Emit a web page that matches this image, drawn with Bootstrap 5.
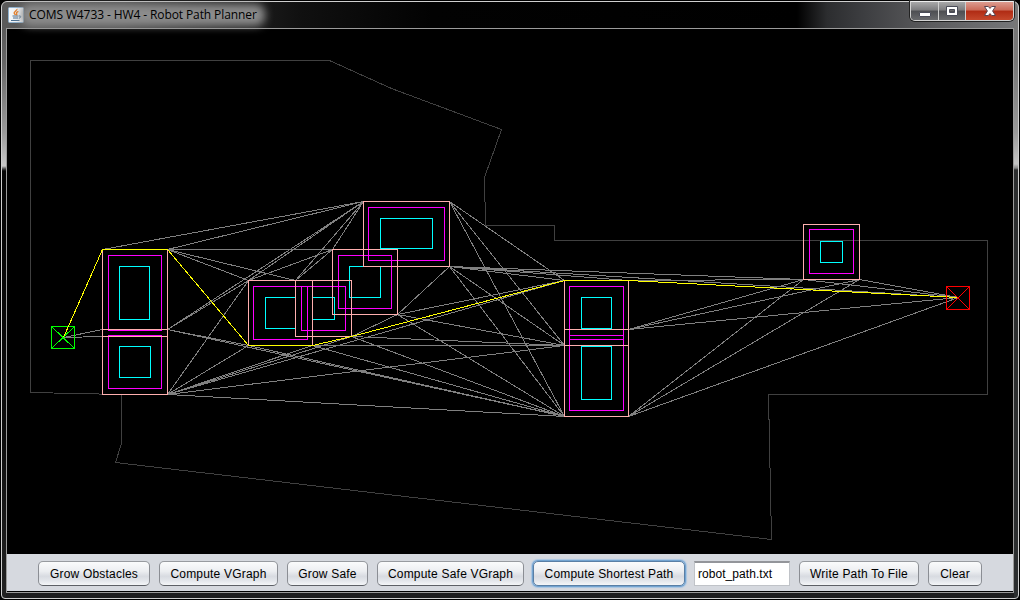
<!DOCTYPE html>
<html lang="en">
<head>
<meta charset="utf-8">
<meta name="viewport" content="width=device-width, initial-scale=1">
<title>COMS W4733 - HW4 - Robot Path Planner</title>
<link href="https://cdn.jsdelivr.net/npm/bootstrap@5.3.0/dist/css/bootstrap.min.css" rel="stylesheet">
<style>
  body { background: #000; width: 1020px; height: 600px; }
  .app-window {
    width: 1020px; height: 600px; padding: 1px 1px 1px 1px;
    background: #000; border-radius: 7px 7px 5px 5px;
  }
  .app-frame {
    border: 1px solid #cfcfcf; border-radius: 6px 6px 4px 4px; padding: 0 4px 4px;
    background:
      linear-gradient(#5a5a5a 28px, #666 60px, #9a9a9a 130px, #c8c8c8 164px, #444 167px, #050505 169px, #0c0c0c 420px, #222 100%) left top / 4px 100% no-repeat,
      linear-gradient(#777 28px, #777 60px, #999 130px, #c4c4c4 162px, #888 166px, #2c2e2f 168px, #2c2e2f 100%) right top / 4px 100% no-repeat,
      linear-gradient(90deg, #5a5a5a 0, #4e4e4e 120px, #1c1c1c 250px, #101010 300px, #020202 430px, #000 795px, #2c2d2f 825px, #3c3d40 860px, #5c5c5e 930px, #77787a 1018px) left top / 100% 27px no-repeat,
      #1d1d1e;
  }
  .title-bar { height: 26px; padding-left: 2px; }
  .title-icon { width: 16px; height: 16px; }
  .title-text {
    position: relative; font: 12px/16px "Open Sans", sans-serif; color: #000;
    letter-spacing: -.1px; margin-left: 5px; white-space: nowrap; z-index: 0;
  }
  .title-text::before {
    content: ""; position: absolute; inset: -3px -8px -3px -8px; z-index: -1;
    background: #8c8c8c; border-radius: 9px; filter: blur(4px);
  }
  .caption-buttons {
    width: 104px; height: 20px; margin-top: -1px;
    border: 1px solid #d2d2d2; border-top: 1px solid #eee; border-radius: 0 0 5px 5px; overflow: hidden;
    box-shadow: 0 0 0 1px #222;
  }
  .cap { background: linear-gradient(#a8a8a9 0, #7c7c7e 45%, #4d4e52 50%, #68696c 100%); border-right: 1px solid #cfcfcf; }
  .cap-min { width: 28px; } .cap-max { width: 27px; }
  .cap-close { background: linear-gradient(#dd9c90 0, #cb6a58 45%, #b02b14 50%, #c5482c 100%); border-right: 0; }
  .client { border: 1px solid #9b9b9b; background: #000; }
  .plan-map { width: 1006px; height: 525px; display: block; }
  .tool-strip { height: 38px; padding-top: 2px; background: #d6d9df; gap: 9px; border-bottom: 1px solid #000; }
  .tool-strip .btn, .tool-strip .form-control {
    font: 12px/16px "Liberation Sans", Arial, sans-serif; color: #000; height: 25px; padding: 0; white-space: nowrap;
    letter-spacing: .2px;
  }
  .tool-strip .btn {
    border: 1px solid #8b8e94; border-top-color: #989ba0; border-bottom-color: #5d6066; border-radius: 5px;
    background: linear-gradient(#fafbfc 0, #eceef1 40%, #d8dbe1 62%, #e2e5ea 80%, #f4f6f8 100%);
  }
  .tool-strip .btn.is-focused { box-shadow: 0 0 0 1px #73a4d1, 0 0 1px 2px #a9c5e2; border-color: #5a7fa5; }
  .tool-strip .form-control {
    width: 96px; border: 1px solid #c0c3c8; border-top: 2px solid #93959a; border-radius: 0; background: #fff; padding-left: 3px;
    letter-spacing: .05px;
  }
</style>
</head>
<body class="m-0 overflow-hidden">
<div class="app-window">
  <div class="app-frame h-100 d-flex flex-column">
    <header class="title-bar d-flex align-items-center flex-shrink-0">
      <svg class="title-icon" viewBox="0 0 16 16">
        <rect x=".5" y=".5" width="15" height="15" rx="1" fill="#f2f5f8" stroke="#8fb0cc"/>
        <path d="M8.800 2c1 1.400-3.400 2.600-2.600 4.300.3.700 1 1 1.300 1.700M10.400 4.400c-1.600.7-2.400 1.400-1.700 2.300.4.600.2 1-.4 1.500" fill="none" stroke="#e8802a" stroke-width="1.400"/>
        <path d="M4.500 9h6M5 11h5M3 13.500h8.500M11 9c2.500-.5 2.300 1.800-.2 2.200" fill="none" stroke="#4c7193" stroke-width="1"/>
      </svg>
      <div class="title-text">COMS W4733 - HW4 - Robot Path Planner</div>
      <div class="caption-buttons d-flex ms-auto align-self-start">
        <div class="cap cap-min d-flex align-items-center justify-content-center">
          <svg width="14" height="14" viewBox="0 0 14 14"><rect x="1.500" y="8.500" width="11" height="4" rx=".5" fill="#fff" stroke="#4a4c58"/></svg>
        </div>
        <div class="cap cap-max d-flex align-items-center justify-content-center">
          <svg width="14" height="14" viewBox="0 0 14 14"><path d="M1.500 2.500h11v9h-11zM4.500 5.500v3h5v-3z" fill="#fff" fill-rule="evenodd" stroke="#4a4c58"/></svg>
        </div>
        <div class="cap cap-close flex-fill d-flex align-items-center justify-content-center">
          <svg width="14" height="14" viewBox="0 0 14 14"><path d="M1.500 2.500h3.800L7 4.400l1.700-1.900h3.800L9.600 7l2.900 4.500H8.700L7 9.600l-1.700 1.900H1.500L4.400 7z" fill="#fff" stroke="#5a4450"/></svg>
        </div>
      </div>
    </header>
    <main class="client">
      <svg class="plan-map" viewBox="7 29 1006 525" shape-rendering="crispEdges" fill="none" stroke-width="1">
        <g transform="translate(.5 .5)">
          <!-- workspace boundary -->
          <path stroke="#404040" d="M30 60H329L391 88L501 129L484 177L485 225H554V240H987V394H768L771 539L115 462L121 443V394L30 392Z"/>
          <!-- visibility graph -->
          <g stroke="#808080">
            <path d="M63 337L102 329M63 337L102 336"/>
            <path d="M102 249L363 201M167 249L363 201M167 249H332M167 249L295 280M167 249L248 280"/>
            <path d="M167 329L363 201M167 329L248 280M167 329L248 345M167 329L564 416"/>
            <path d="M167 394L248 280M167 394L248 345M167 394L312 345M167 394L351 336M167 394L564 280M167 394L564 345M167 394L564 416"/>
            <path d="M248 280L363 201M248 280L332 249M295 280L363 201M295 280L332 249M332 249L363 201"/>
            <path d="M248 345L564 416M312 345H564M312 345L564 416M351 336L397 314M351 336L564 345M351 336L564 416"/>
            <path d="M397 314L449 266M397 314L564 280M397 314L564 345M397 314L564 416"/>
            <path d="M449 201L564 280M449 201L564 345M449 201L564 416"/>
            <path d="M449 266L564 280M449 266L628 280M449 266L803 279M449 266L958 297M449 266L564 345M449 266L564 416"/>
            <path d="M628 280L803 279M628 329L803 279M628 329L859 279M628 329L958 297"/>
            <path d="M628 416L803 279M628 416L859 279M628 416L958 297M803 279L958 297M859 279L958 297"/>
          </g>
          <!-- obstacles -->
          <g stroke="#0ff">
            <path d="M119 266H149V319H119ZM119 346H150V377H119Z"/>
            <path d="M295 297H265V328H295M312 297H334V319H312M363 266H349V297H380V266M380 218H432V248H380Z"/>
            <path d="M581 297H611V328H581ZM581 346H611V399H581ZM820 241H842V262H820Z"/>
          </g>
          <!-- grown obstacles -->
          <g stroke="#f0f">
            <path d="M108 255H161V330H108ZM108 335H161V388H108Z"/>
            <path d="M253 286H307V339H253ZM301 286H345V330H301ZM338 255H391V308H338ZM368 207H444V260H368Z"/>
            <path d="M569 286H623V339H569ZM569 335H623V410H569ZM809 229H853V273H809Z"/>
          </g>
          <!-- safety margin -->
          <g stroke="#ffafaf">
            <path d="M102 249H167V336H102ZM102 329H167V394H102Z"/>
            <path d="M248 280H312V345H248ZM295 280H351V336H295ZM332 249H397V314H332ZM363 201H449V266H363Z"/>
            <path d="M564 280H628V345H564ZM564 329H628V416H564ZM803 224H859V279H803Z"/>
          </g>
          <!-- shortest path, start and goal -->
          <path stroke="#0f0" d="M51 326H74V348H51ZL74 348M74 326L51 348"/>
          <path stroke="#ff0" d="M63 337L102 249H167L248 345H312L351 336L564 280H628L958 297"/>
          <path stroke="#f00" d="M946 286H969V309H946ZL969 309M969 286L946 309"/>
        </g>
      </svg>
      <div class="tool-strip d-flex align-items-center justify-content-center">
        <button type="button" class="btn" style="width:112px">Grow Obstacles</button>
        <button type="button" class="btn" style="width:119px">Compute VGraph</button>
        <button type="button" class="btn" style="width:81px">Grow Safe</button>
        <button type="button" class="btn" style="width:147px">Compute Safe VGraph</button>
        <button type="button" class="btn is-focused" style="width:152px">Compute Shortest Path</button>
        <input type="text" class="form-control" value="robot_path.txt" aria-label="File name">
        <button type="button" class="btn" style="width:120px">Write Path To File</button>
        <button type="button" class="btn" style="width:54px">Clear</button>
      </div>
    </main>
  </div>
</div>
<script src="https://cdn.jsdelivr.net/npm/bootstrap@5.3.0/dist/js/bootstrap.bundle.min.js"></script>
</body>
</html>
